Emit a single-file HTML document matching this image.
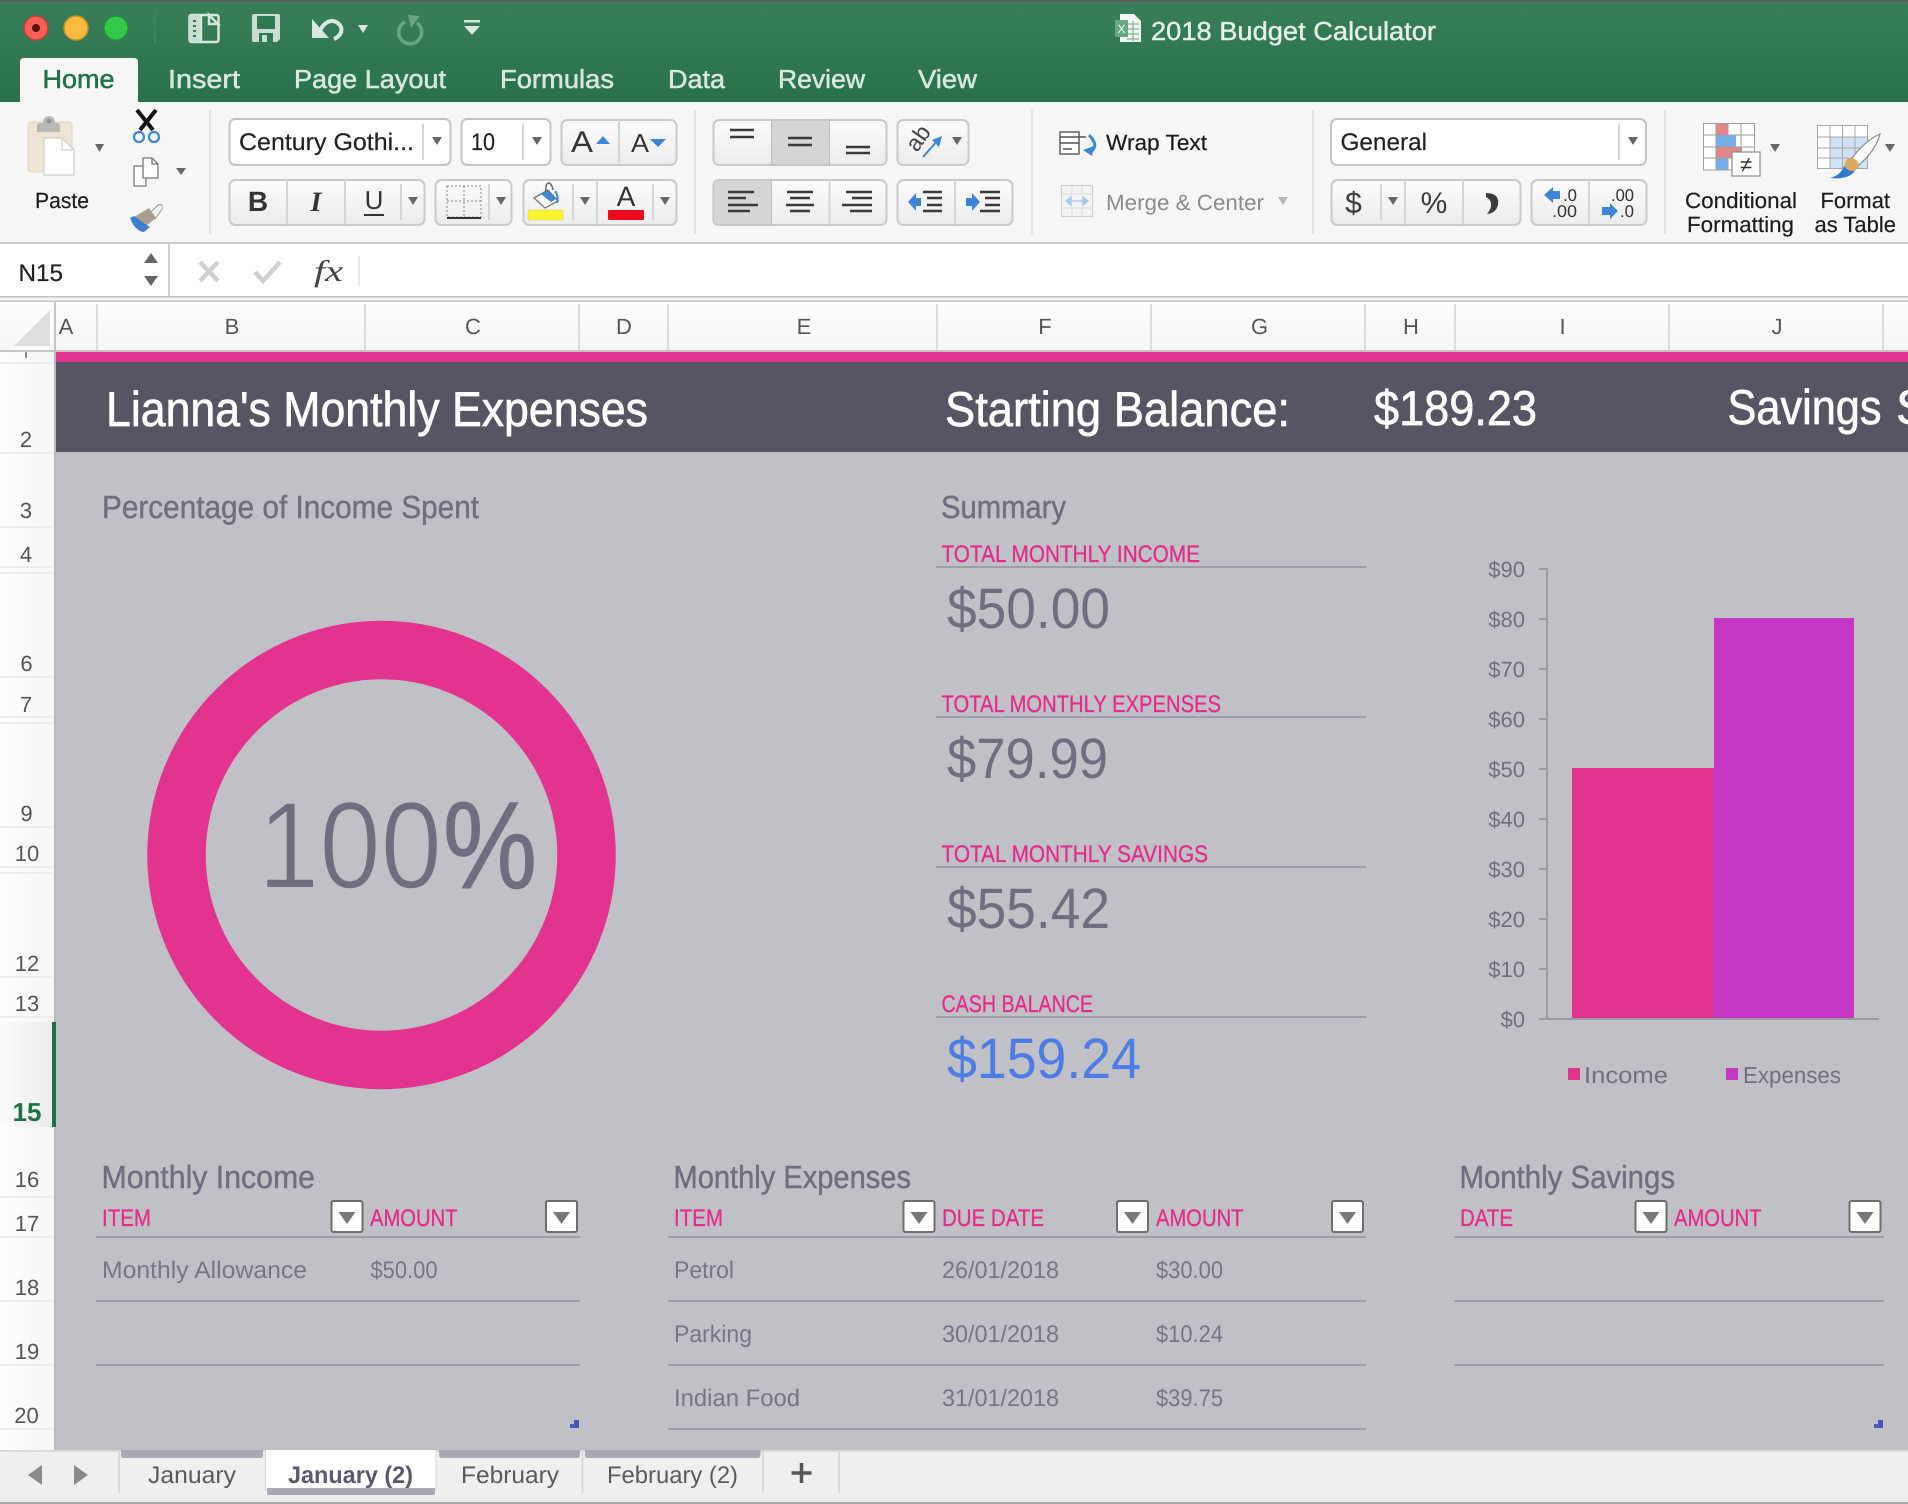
<!DOCTYPE html>
<html><head><meta charset="utf-8"><title>2018 Budget Calculator</title>
<style>
html,body{margin:0;padding:0;background:#c0c1c6}
svg{display:block;position:absolute;left:0;top:0}
text{font-family:"Liberation Sans",sans-serif;text-rendering:geometricPrecision;white-space:pre}
.tab{font-size:26px;fill:#d9e8df;stroke:#d9e8df;stroke-width:.5}
.rib{font-size:22px;fill:#1c1c1c;stroke:#1c1c1c;stroke-width:.2}
.box{font-size:24px;fill:#222;stroke:#222;stroke-width:.2}
.col{font-size:22px;fill:#555;text-anchor:middle}
.row{font-size:22px;fill:#555;text-anchor:middle}
.h1{font-size:49px;fill:#fff;stroke:#fff;stroke-width:.7}
.h2{font-size:32px;fill:#6f6e80;stroke:#6f6e80;stroke-width:.4}
.pk{font-size:24px;fill:#e62a8c;stroke:#e62a8c;stroke-width:.3}
.big{font-size:57px;fill:#6f6e80}
.cell{font-size:24px;fill:#75758a}
.ax{font-size:22px;fill:#706f80;text-anchor:end}
.lg{font-size:23px;fill:#706f80}
.sh{font-size:24px;fill:#5a5a5a}
.sep{stroke:#dfdfdf;stroke-width:2}
.cs{stroke:#dcdcdc;stroke-width:2}
.rs{stroke:#ececec;stroke-width:2}
.tl{stroke:#9e9ea8;stroke-width:2}
.g{fill:url(#btn);stroke:#c9c9c9;stroke-width:2}
.w{fill:#fff;stroke:#c4c4c4;stroke-width:2}
.bs{stroke:#d4d4d4;stroke-width:2}
.al{stroke:#3a3a3a;stroke-width:2.4}
</style></head><body>
<svg width="1908" height="1504" viewBox="0 0 1908 1504" xmlns="http://www.w3.org/2000/svg">
<defs>
<linearGradient id="gr" x1="0" y1="0" x2="0" y2="1"><stop offset="0" stop-color="#398059"/><stop offset="1" stop-color="#28714a"/></linearGradient>
<linearGradient id="btn" x1="0" y1="0" x2="0" y2="1"><stop offset="0" stop-color="#fbfbfb"/><stop offset="1" stop-color="#ececec"/></linearGradient>
<linearGradient id="rh" x1="0" y1="0" x2="1" y2="0"><stop offset="0" stop-color="#ffffff"/><stop offset="1" stop-color="#f5f5f5"/></linearGradient>
<linearGradient id="rsel" x1="0" y1="0" x2="1" y2="0"><stop offset="0" stop-color="#fbfbfb"/><stop offset="1" stop-color="#ebebeb"/></linearGradient>
<linearGradient id="hd" x1="0" y1="0" x2="0" y2="1"><stop offset="0" stop-color="#fdfdfd"/><stop offset="1" stop-color="#f6f6f6"/></linearGradient>
<path id="tri" d="M-5 -4H5L0 4Z" fill="#666"/>
<g id="fb"><rect x="1" y="1" width="31" height="31" rx="2" fill="#fff" stroke="#6e6e6e" stroke-width="2"/><path d="M8 12H25L16.500 24Z" fill="#777"/></g>
<path id="mk" d="M4 0H9V8H0V4H4Z" fill="#4758b8"/>
</defs>

<!-- page background -->
<rect width="1908" height="1504" fill="#c0c1c6"/>

<!-- title bar -->
<rect width="1908" height="102" fill="url(#gr)"/>
<rect width="1908" height="2" fill="#5a5f5c"/>
<circle cx="36" cy="28" r="12" fill="#fb5f57" stroke="#b5443c" stroke-width="1.500"/><circle cx="36" cy="28" r="4" fill="#5c0d08"/>
<circle cx="76" cy="28" r="12" fill="#fdbb3e" stroke="#c88f2c" stroke-width="1.500"/>
<circle cx="116" cy="28" r="12" fill="#34c84a" stroke="#23933a" stroke-width="1.500"/>
<path d="M155 12V43" stroke="#3f8762" stroke-width="1.500"/>
<!-- sidebar icon -->
<rect x="189.500" y="15" width="29" height="27" rx="2" fill="none" stroke="#d6e6dc" stroke-width="2.500"/>
<rect x="189" y="15" width="11" height="27" fill="#c9ddd1"/>
<path d="M193 21h3M193 26h3M193 31h3M193 36h3" stroke="#2f7a52" stroke-width="2"/>
<path d="M201 15V42M209 15l9 9h-9z" fill="none" stroke="#d6e6dc" stroke-width="2.500"/>
<!-- save -->
<path d="M252 16q0-2 2-2h24q2 0 2 2v23l-3 3h-23q-2 0-2-2z" fill="#c9ddd1"/>
<rect x="257" y="16" width="18" height="13" fill="#2f7a52"/>
<rect x="259" y="33" width="14" height="9" fill="#2f7a52"/><rect x="262" y="35" width="5" height="7" fill="#c9ddd1"/>
<!-- undo -->
<path d="M320 32C322 23 331 19 336 22C344 26 343 35 334 39" fill="none" stroke="#d9e8df" stroke-width="4"/>
<path d="M312 19V38H329Z" fill="#d9e8df"/>
<path d="M358 25H368L363 33Z" fill="#d9e8df"/>
<!-- redo -->
<path d="M405 22A11.500 11.500 0 1 0 417 23" fill="none" stroke="#6aa386" stroke-width="3.500"/>
<path d="M408 15L420 16L411 28Z" fill="#6aa386"/>
<!-- customise -->
<rect x="464" y="20" width="16" height="2.500" fill="#d9e8df"/><path d="M464 26H480L472 35Z" fill="#d9e8df"/>

<!-- title -->
<path d="M1120 14H1134L1141 21V42H1120Z" fill="#f2f7f3"/>
<path d="M1127 24H1139M1127 29H1139M1127 34H1139M1127 39H1139M1133 21V41" stroke="#7fb495" stroke-width="1.200"/>
<rect x="1115" y="20" width="13" height="17" fill="#6aa882"/>
<text x="1117.500" y="33" style="font-size:12px;fill:#fff">X</text>
<text x="1151" y="40" textLength="285" lengthAdjust="spacingAndGlyphs" style="font-size:26px;fill:#e6efe9;stroke:#e6efe9;stroke-width:.4">2018 Budget Calculator</text>

<!-- ribbon tabs -->
<path d="M20 102V62q0-4 4-4H134q4 0 4 4V102Z" fill="#f6f6f6"/>
<text x="42.500" y="88" textLength="72" lengthAdjust="spacingAndGlyphs" class="tab" style="fill:#1f7248;stroke:#1f7248">Home</text>
<text x="168" y="88" textLength="72" lengthAdjust="spacingAndGlyphs" class="tab">Insert</text>
<text x="294" y="88" textLength="152" lengthAdjust="spacingAndGlyphs" class="tab">Page Layout</text>
<text x="500" y="88" textLength="114" lengthAdjust="spacingAndGlyphs" class="tab">Formulas</text>
<text x="668" y="88" textLength="57" lengthAdjust="spacingAndGlyphs" class="tab">Data</text>
<text x="778" y="88" textLength="87" lengthAdjust="spacingAndGlyphs" class="tab">Review</text>
<text x="918" y="88" textLength="59" lengthAdjust="spacingAndGlyphs" class="tab">View</text>

<!-- ribbon -->
<rect y="102" width="1908" height="140" fill="#f6f6f6"/>
<rect y="242" width="1908" height="2" fill="#cbcbcb"/>

<!-- paste -->
<rect x="28" y="122" width="44" height="50" rx="3" fill="#efe4d3" stroke="#e2d5c0"/>
<path d="M37 132V126Q37 123 40 123H43Q43 116 49 116Q55 116 55 123H57Q60 123 60 126V132Z" fill="#b9b9b9"/>
<circle cx="49" cy="121" r="2.500" fill="#8e8e8e"/>
<path d="M44 138H62L74 150V175H44Z" fill="#fff" stroke="#cfcfcf" stroke-width="1.200"/><path d="M62 138V150H74" fill="none" stroke="#cfcfcf" stroke-width="1.200"/>
<path d="M95 144H104L99.500 152Z" fill="#666"/>
<text x="35" y="208" textLength="54" lengthAdjust="spacingAndGlyphs" class="rib">Paste</text>
<!-- scissors -->
<path d="M137 110L153 130M156 110L140 130" stroke="#111" stroke-width="4"/>
<circle cx="139" cy="137" r="5" fill="none" stroke="#3d85d6" stroke-width="2.200"/><circle cx="154" cy="137" r="5" fill="none" stroke="#3d85d6" stroke-width="2.200"/>
<!-- copy -->
<path d="M134 166H146V186H134Z" fill="#fff" stroke="#777" stroke-width="1.300"/>
<path d="M143 158H152L158 164V178H143Z" fill="#fff" stroke="#777" stroke-width="1.300"/><path d="M152 158V164H158" fill="none" stroke="#777" stroke-width="1.300"/>
<path d="M176 168H186L181 175Z" fill="#666"/>
<!-- format painter -->
<path d="M150 213L158 205Q163 203 162 209L155 219Z" fill="#f2f2f2" stroke="#999" stroke-width="1"/>
<path d="M134 217L149 208L156 218L146 226Z" fill="#a99d90"/>
<path d="M130 218L134 216L148 226L150 227L144 232Q135 231 130 218Z" fill="#3d7fcf"/>
<path d="M210 110V234" style="stroke:#e2e2e2;stroke-width:2"/>

<!-- font name / size -->
<rect x="229.500" y="119" width="221" height="46" rx="6" class="w"/>
<text x="239" y="150" textLength="175" lengthAdjust="spacingAndGlyphs" class="box">Century Gothi...</text>
<path d="M423 124V160" class="bs"/><use href="#tri" x="437" y="141"/>
<rect x="461.500" y="119" width="89" height="46" rx="6" class="w"/>
<text x="471" y="150" textLength="24" lengthAdjust="spacingAndGlyphs" class="box">10</text>
<path d="M523 124V160" class="bs"/><use href="#tri" x="537" y="141"/>
<!-- grow shrink -->
<rect x="561.500" y="120" width="115" height="45" rx="6" class="g"/>
<path d="M619 120V165" class="bs"/>
<text x="571" y="152" textLength="22" lengthAdjust="spacingAndGlyphs" style="font-size:30px;fill:#333">A</text>
<path d="M596 144H610L603 136Z" fill="#3d85d6"/>
<text x="631" y="152" textLength="18" lengthAdjust="spacingAndGlyphs" style="font-size:26px;fill:#333">A</text>
<path d="M650 139H666L658 147Z" fill="#3d85d6"/>
<!-- BIU -->
<rect x="229.500" y="180" width="195" height="45" rx="6" class="g"/>
<path d="M287 180V225M345 180V225" class="bs"/><path d="M401 184V220" class="bs"/>
<text x="258" y="211" style="font-size:28px;font-weight:700;fill:#333;text-anchor:middle">B</text>
<text x="316" y="211" style="font-size:28px;font-weight:700;font-style:italic;font-family:'Liberation Serif',serif;fill:#333;text-anchor:middle">I</text>
<text x="374" y="209" style="font-size:26px;fill:#333;text-anchor:middle">U</text>
<path d="M364 215H384" stroke="#333" stroke-width="2"/>
<use href="#tri" x="413" y="201"/>
<!-- borders -->
<rect x="435.500" y="180" width="76" height="45" rx="6" class="g"/>
<path d="M447 186H481V217H447ZM464 186V217M447 201H481" fill="none" stroke="#9a9a9a" stroke-width="1.200" stroke-dasharray="2 2"/>
<path d="M447 218H481" stroke="#333" stroke-width="2"/>
<path d="M489 184V220" class="bs"/><use href="#tri" x="501" y="201"/>
<!-- fill & font colour -->
<rect x="523.500" y="180" width="153" height="45" rx="6" class="g"/>
<path d="M597 180V225" class="bs"/><path d="M573 184V220M653 184V220" class="bs"/>
<path d="M534 198L548 190L558 201L545 208Z" fill="#fff" stroke="#777" stroke-width="1.300"/>
<path d="M541 194L548 190L556 199L551 202Z" fill="#3d85d6"/>
<path d="M546 192Q545 183 549 183Q552 184 553 190" fill="none" stroke="#666" stroke-width="1.500"/>
<path d="M555 191Q559 196 557 203" fill="none" stroke="#3d85d6" stroke-width="2"/>
<rect x="528" y="210" width="35" height="10" rx="1" fill="#fdf32d" stroke="#d8d058" stroke-width=".6"/>
<use href="#tri" x="585" y="201"/>
<text x="626" y="206" style="font-size:28px;fill:#333;text-anchor:middle">A</text>
<rect x="608" y="210" width="36" height="10" rx="1" fill="#ee0a1e"/>
<use href="#tri" x="665" y="201"/>
<path d="M695 110V234" style="stroke:#e2e2e2;stroke-width:2"/>

<!-- vertical align -->
<rect x="713.500" y="120" width="173" height="45" rx="6" class="g"/>
<rect x="771.500" y="120" width="58" height="45" fill="#d5d5d5" stroke="#bdbdbd" stroke-width="1"/>
<path d="M730 130H754M730 137H754M788 138H812M788 145H812M846 147H870M846 153H870" class="al"/>
<!-- orientation -->
<rect x="897.500" y="120" width="71" height="45" rx="6" class="g"/>
<text transform="translate(917,153) rotate(-55)" style="font-size:23px;fill:#444">ab</text>
<path d="M923 157L938 140" stroke="#3d85d6" stroke-width="2"/><path d="M942 136L932 140L939 147Z" fill="#3d85d6"/>
<use href="#tri" x="957" y="141"/>
<!-- h align -->
<rect x="713.500" y="180" width="173" height="45" rx="6" class="g"/>
<path d="M713 186q0-6 6-6H771.500V225H719q-6 0-6-6Z" fill="#d5d5d5" stroke="#bdbdbd" stroke-width="1"/>
<path d="M829.500 180V225" class="bs"/>
<path d="M728 192H754M728 198H746M728 205H758M728 211H750" class="al"/>
<path d="M787 192H813M790 198H810M786 205H814M790 211H810" class="al"/>
<path d="M846 192H872M852 198H872M842 205H872M850 211H872" class="al"/>
<!-- indent -->
<rect x="897.500" y="180" width="115" height="45" rx="6" class="g"/>
<path d="M955 180V225" class="bs"/>
<path d="M908 202L916 193V198H921V206H916V211Z" fill="#3d85d6"/>
<path d="M923 192H942M927 198H942M927 205H942M923 211H942" class="al"/>
<path d="M980 202L972 193V198H966V206H972V211Z" fill="#3d85d6"/>
<path d="M980 192H1000M985 198H1000M985 205H1000M980 211H1000" class="al"/>
<path d="M1032 110V234" style="stroke:#e2e2e2;stroke-width:2"/>

<!-- wrap -->
<rect x="1060" y="132" width="19" height="22" fill="#fff" stroke="#555" stroke-width="1.400"/>
<path d="M1060 137H1086M1060 143H1079M1063 149H1072" stroke="#555" stroke-width="1.400"/>
<path d="M1089 135Q1100 146 1090 152" fill="none" stroke="#3d85d6" stroke-width="3"/><path d="M1083 150L1094 146L1092 156Z" fill="#3d85d6"/>
<text x="1106" y="150" textLength="101" lengthAdjust="spacingAndGlyphs" class="rib">Wrap Text</text>
<!-- merge -->
<rect x="1061.500" y="185.500" width="31" height="31" fill="#f3f3f3" stroke="#cfcfcf" stroke-width="1.200"/>
<path d="M1072 186V194M1082 186V194M1072 208V217M1082 208V217M1062 194H1093M1062 208H1093" stroke="#d8d8d8" stroke-width="1"/>
<path d="M1066 201H1088M1066 201L1071 197V205ZM1088 201L1083 197V205Z" fill="#a9c8ec" stroke="#a9c8ec" stroke-width="1.500"/>
<text x="1106" y="210" textLength="158" lengthAdjust="spacingAndGlyphs" class="rib" style="fill:#8a8a8a;stroke:none">Merge &amp; Center</text>
<path d="M1278 197H1288L1283 205Z" fill="#b5b5b5"/>
<path d="M1313 110V234" style="stroke:#e2e2e2;stroke-width:2"/>

<!-- number format -->
<rect x="1331" y="119" width="315" height="46" rx="6" class="w"/>
<text x="1340.500" y="150" textLength="86.500" lengthAdjust="spacingAndGlyphs" class="box">General</text>
<path d="M1619 124V160" class="bs"/><use href="#tri" x="1633" y="141"/>
<rect x="1331.500" y="180" width="189" height="45" rx="6" class="g"/>
<path d="M1405 180V225M1463 180V225" class="bs"/><path d="M1381 184V220" class="bs"/>
<text x="1353.500" y="213" style="font-size:30px;fill:#3c3c3c;text-anchor:middle">$</text>
<use href="#tri" x="1393" y="201"/>
<text x="1434" y="213" style="font-size:30px;fill:#3c3c3c;text-anchor:middle">%</text>
<path d="M1486 193Q1500 193 1498 205Q1496 213 1487 214Q1492 208 1491 203Q1490 199 1486 197Z" fill="#3c3c3c"/>
<rect x="1531.500" y="180" width="115" height="45" rx="6" class="g"/>
<path d="M1589 180V225" class="bs"/>
<path d="M1544 195L1553 187V191H1560V199H1553V203Z" fill="#3d85d6"/>
<text x="1563" y="201" textLength="14" lengthAdjust="spacingAndGlyphs" style="font-size:17px;fill:#333">.0</text>
<text x="1552" y="217" textLength="25" lengthAdjust="spacingAndGlyphs" style="font-size:17px;fill:#333">.00</text>
<text x="1611" y="201" textLength="23" lengthAdjust="spacingAndGlyphs" style="font-size:17px;fill:#333">.00</text>
<path d="M1618 211L1610 203V207H1602V215H1610V219Z" fill="#3d85d6"/>
<text x="1620" y="217" textLength="14" lengthAdjust="spacingAndGlyphs" style="font-size:17px;fill:#333">.0</text>
<path d="M1665 110V234" style="stroke:#e2e2e2;stroke-width:2"/>

<!-- conditional formatting -->
<rect x="1703" y="123" width="52" height="47" fill="#fff"/>
<rect x="1716" y="124" width="12" height="11" fill="#e78486"/>
<rect x="1716" y="135" width="20" height="12" fill="#74aeeb"/>
<rect x="1716" y="147" width="26" height="11" fill="#e78486"/>
<rect x="1716" y="158" width="12" height="12" fill="#74aeeb"/>
<path d="M1703.500 123.500H1754.500V170H1703.500ZM1716 124V170M1728 124V170M1741 124V170M1704 135H1755M1704 147H1755M1704 158H1755" fill="none" stroke="#9e9e9e" stroke-width="1"/>
<rect x="1732" y="152" width="28" height="24" fill="#fff" stroke="#8a8a8a" stroke-width="1.200"/>
<text x="1746" y="172" style="font-size:22px;fill:#333;text-anchor:middle">≠</text>
<path d="M1770 144H1780L1775 152Z" fill="#666"/>
<text x="1685" y="208" textLength="112" lengthAdjust="spacingAndGlyphs" class="rib">Conditional</text>
<text x="1687" y="232" textLength="107" lengthAdjust="spacingAndGlyphs" class="rib">Formatting</text>

<!-- format as table -->
<rect x="1817.500" y="125.500" width="50" height="43" fill="#fff"/>
<rect x="1830" y="137" width="38" height="31" fill="#d0e2f5"/>
<path d="M1817.500 125.500H1867.500V168.500H1817.500ZM1830 126V168M1842.500 126V168M1855 126V168M1818 137H1868M1818 148H1868M1818 158H1868" fill="none" stroke="#a8a8a8" stroke-width="1"/>
<path d="M1880 134Q1866 140 1852 158L1859 165Q1876 150 1880 134Z" fill="#fdfdfd" stroke="#8a8a8a" stroke-width="1.200"/>
<path d="M1848 158Q1858 157 1859 167Q1854 174 1845 171Q1843 163 1848 158Z" fill="#dca964"/>
<path d="M1830 178Q1841 175 1844 166Q1848 172 1855 171Q1848 180 1830 178Z" fill="#2e7bd3"/>
<path d="M1885 144H1895L1890 152Z" fill="#666"/>
<text x="1820.500" y="208" textLength="69.500" lengthAdjust="spacingAndGlyphs" class="rib">Format</text>
<text x="1814.500" y="232" textLength="81.500" lengthAdjust="spacingAndGlyphs" class="rib">as Table</text>

<!-- formula bar -->
<rect y="244" width="1908" height="52" fill="#fff"/>
<rect x="168" y="244" width="2" height="52" fill="#cfcfcf"/>
<text x="18.500" y="281" textLength="44.500" lengthAdjust="spacingAndGlyphs" class="box">N15</text>
<path d="M144 263H158L151 253Z" fill="#666"/><path d="M144 276H158L151 286Z" fill="#666"/>
<path d="M200 262L218 281M218 262L200 281" stroke="#d0d0d0" stroke-width="4.500"/>
<path d="M255 272L263 281L280 262" fill="none" stroke="#d0d0d0" stroke-width="4.500"/>
<text x="314" y="281" textLength="29" lengthAdjust="spacingAndGlyphs" style="font-family:'Liberation Serif',serif;font-style:italic;font-size:30px;fill:#444">fx</text>
<path d="M359 256V286" stroke="#e0e0e0" stroke-width="1.500"/>
<rect y="296" width="1908" height="1.500" fill="#c4c4c4"/>
<rect y="297.500" width="1908" height="3" fill="#f2f2f2"/>
<rect y="300.500" width="1908" height="1.500" fill="#c4c4c4"/>

<!-- column header -->
<rect y="302" width="1908" height="48" fill="url(#hd)"/>
<rect y="350" width="1908" height="2" fill="#c6c6c6"/>
<path d="M14 346H50V310Z" fill="#dedede"/>
<rect x="54" y="302" width="2" height="50" fill="#c4c4c4"/>
<path d="M97 304V350M365 304V350M579 304V350M668 304V350M937 304V350M1151 304V350M1365 304V350M1455 304V350M1669 304V350M1883 304V350" class="cs"/>
<text x="66" y="334" class="col">A</text>
<text x="232" y="334" class="col">B</text>
<text x="473" y="334" class="col">C</text>
<text x="624" y="334" class="col">D</text>
<text x="804" y="334" class="col">E</text>
<text x="1045" y="334" class="col">F</text>
<text x="1259.500" y="334" class="col">G</text>
<text x="1411" y="334" class="col">H</text>
<text x="1562.500" y="334" class="col">I</text>
<text x="1777" y="334" class="col">J</text>

<!-- row header -->
<rect y="352" width="54" height="1098" fill="url(#rh)"/>
<rect x="54" y="352" width="2" height="1098" fill="#b9b9b9"/>
<rect y="1022" width="52" height="105" fill="url(#rsel)"/>
<rect x="52" y="1022" width="4" height="105" fill="#1f7246"/>
<path d="M26 352V358" stroke="#666" stroke-width="1.500"/>
<path d="M0 363H54M0 453H54M0 527H54M0 567H54M0 573H54M0 677H54M0 717H54M0 723H54M0 827H54M0 867H54M0 873H54M0 977H54M0 1017H54M0 1197H54M0 1237H54M0 1301H54M0 1365H54M0 1429H54" class="rs"/>
<text x="26" y="447" class="row">2</text>
<text x="26" y="518" class="row">3</text>
<text x="26" y="562" class="row">4</text>
<text x="26.500" y="671" class="row">6</text>
<text x="26" y="712" class="row">7</text>
<text x="26.500" y="821" class="row">9</text>
<text x="27" y="861" class="row">10</text>
<text x="27" y="971" class="row">12</text>
<text x="27" y="1011" class="row">13</text>
<text x="27" y="1121" style="font-size:26px;font-weight:700;fill:#1f7246;text-anchor:middle">15</text>
<text x="27" y="1187" class="row">16</text>
<text x="27" y="1231" class="row">17</text>
<text x="27" y="1295" class="row">18</text>
<text x="27" y="1359" class="row">19</text>
<text x="26.500" y="1423" class="row">20</text>

<!-- sheet banner -->
<rect x="56" y="352" width="1852" height="10" fill="#e2338e"/>
<rect x="56" y="362" width="1852" height="90" fill="#555563"/>
<text x="106" y="426" textLength="542" lengthAdjust="spacingAndGlyphs" class="h1">Lianna's Monthly Expenses</text>
<text x="945" y="426" textLength="345" lengthAdjust="spacingAndGlyphs" class="h1">Starting Balance:</text>
<text x="1374" y="425" textLength="163" lengthAdjust="spacingAndGlyphs" class="h1">$189.23</text>
<text x="1727.500" y="424" textLength="154" lengthAdjust="spacingAndGlyphs" class="h1">Savings</text>
<text x="1896" y="424" class="h1">S</text>

<!-- donut -->
<text x="102" y="518" textLength="377" lengthAdjust="spacingAndGlyphs" class="h2">Percentage of Income Spent</text>
<circle cx="381.500" cy="855" r="205" fill="none" stroke="#e2338e" stroke-width="58.500"/>
<text x="258" y="888" textLength="184" lengthAdjust="spacingAndGlyphs" style="font-size:124px;fill:#6e6e80;stroke:#c0c1c6;stroke-width:2">100</text>
<text x="443" y="888" textLength="94" lengthAdjust="spacingAndGlyphs" style="font-size:124px;fill:#6e6e80;stroke:#6e6e80;stroke-width:1">%</text>

<!-- summary -->
<text x="941" y="518" textLength="125" lengthAdjust="spacingAndGlyphs" class="h2">Summary</text>
<text x="941.500" y="562" textLength="258.500" lengthAdjust="spacingAndGlyphs" class="pk">TOTAL MONTHLY INCOME</text>
<path d="M936 567H1366M936 717H1366M936 867H1366M936 1017H1366" class="tl"/>
<text x="947" y="628" textLength="163" lengthAdjust="spacingAndGlyphs" class="big">$50.00</text>
<text x="941.500" y="712" textLength="279.500" lengthAdjust="spacingAndGlyphs" class="pk">TOTAL MONTHLY EXPENSES</text>
<text x="947" y="778" textLength="161" lengthAdjust="spacingAndGlyphs" class="big">$79.99</text>
<text x="941.500" y="862" textLength="266.500" lengthAdjust="spacingAndGlyphs" class="pk">TOTAL MONTHLY SAVINGS</text>
<text x="947" y="928" textLength="163" lengthAdjust="spacingAndGlyphs" class="big">$55.42</text>
<text x="941.500" y="1012" textLength="151.500" lengthAdjust="spacingAndGlyphs" class="pk">CASH BALANCE</text>
<text x="947" y="1078" textLength="194" lengthAdjust="spacingAndGlyphs" class="big" style="fill:#4d7ce4">$159.24</text>

<!-- chart -->
<rect x="1572" y="768" width="142" height="250" fill="#e2338e"/>
<rect x="1714" y="618" width="140" height="400" fill="#c637c6"/>
<path d="M1547 568V1019M1539 1019H1879M1539 569H1547M1539 619H1547M1539 669H1547M1539 719H1547M1539 769H1547M1539 819H1547M1539 869H1547M1539 919H1547M1539 969H1547" stroke="#9a9aa2" stroke-width="2" fill="none"/>
<text x="1525" y="577" class="ax">$90</text>
<text x="1525" y="627" class="ax">$80</text>
<text x="1525" y="677" class="ax">$70</text>
<text x="1525" y="727" class="ax">$60</text>
<text x="1525" y="777" class="ax">$50</text>
<text x="1525" y="827" class="ax">$40</text>
<text x="1525" y="877" class="ax">$30</text>
<text x="1525" y="927" class="ax">$20</text>
<text x="1525" y="977" class="ax">$10</text>
<text x="1525" y="1027" class="ax">$0</text>
<rect x="1568" y="1068" width="12" height="12" fill="#e2338e"/>
<text x="1584" y="1083" textLength="84" lengthAdjust="spacingAndGlyphs" class="lg">Income</text>
<rect x="1726" y="1068" width="12" height="12" fill="#c637c6"/>
<text x="1743" y="1083" textLength="98" lengthAdjust="spacingAndGlyphs" class="lg">Expenses</text>

<!-- monthly income -->
<text x="101.500" y="1188" textLength="213.500" lengthAdjust="spacingAndGlyphs" class="h2">Monthly Income</text>
<text x="102" y="1226" textLength="49" lengthAdjust="spacingAndGlyphs" class="pk">ITEM</text>
<text x="370" y="1226" textLength="87.500" lengthAdjust="spacingAndGlyphs" class="pk">AMOUNT</text>
<use href="#fb" x="330.500" y="1200"/><use href="#fb" x="545" y="1200"/>
<path d="M96 1237H580M96 1301H580M96 1365H580" class="tl"/>
<text x="102" y="1278" textLength="205" lengthAdjust="spacingAndGlyphs" class="cell">Monthly Allowance</text>
<text x="370.500" y="1278" textLength="67" lengthAdjust="spacingAndGlyphs" class="cell">$50.00</text>
<use href="#mk" x="570" y="1420"/>

<!-- monthly expenses -->
<text x="673.500" y="1188" textLength="237.500" lengthAdjust="spacingAndGlyphs" class="h2">Monthly Expenses</text>
<text x="674" y="1226" textLength="49" lengthAdjust="spacingAndGlyphs" class="pk">ITEM</text>
<text x="942" y="1226" textLength="102" lengthAdjust="spacingAndGlyphs" class="pk">DUE DATE</text>
<text x="1156" y="1226" textLength="87.500" lengthAdjust="spacingAndGlyphs" class="pk">AMOUNT</text>
<use href="#fb" x="902.500" y="1200"/><use href="#fb" x="1116" y="1200"/><use href="#fb" x="1331" y="1200"/>
<path d="M668 1237H1366M668 1301H1366M668 1365H1366M668 1429H1366" class="tl"/>
<text x="674" y="1278" textLength="60" lengthAdjust="spacingAndGlyphs" class="cell">Petrol</text>
<text x="942" y="1278" textLength="117" lengthAdjust="spacingAndGlyphs" class="cell">26/01/2018</text>
<text x="1156" y="1278" textLength="67" lengthAdjust="spacingAndGlyphs" class="cell">$30.00</text>
<text x="674" y="1342" textLength="78" lengthAdjust="spacingAndGlyphs" class="cell">Parking</text>
<text x="942" y="1342" textLength="117" lengthAdjust="spacingAndGlyphs" class="cell">30/01/2018</text>
<text x="1156" y="1342" textLength="67" lengthAdjust="spacingAndGlyphs" class="cell">$10.24</text>
<text x="674" y="1406" textLength="126" lengthAdjust="spacingAndGlyphs" class="cell">Indian Food</text>
<text x="942" y="1406" textLength="117" lengthAdjust="spacingAndGlyphs" class="cell">31/01/2018</text>
<text x="1156" y="1406" textLength="67" lengthAdjust="spacingAndGlyphs" class="cell">$39.75</text>

<!-- monthly savings -->
<text x="1459.500" y="1188" textLength="215.500" lengthAdjust="spacingAndGlyphs" class="h2">Monthly Savings</text>
<text x="1460" y="1226" textLength="53" lengthAdjust="spacingAndGlyphs" class="pk">DATE</text>
<text x="1674" y="1226" textLength="87.500" lengthAdjust="spacingAndGlyphs" class="pk">AMOUNT</text>
<use href="#fb" x="1634.500" y="1200"/><use href="#fb" x="1848.500" y="1200"/>
<path d="M1454 1237H1884M1454 1301H1884M1454 1365H1884" class="tl"/>
<use href="#mk" x="1874" y="1420"/>

<!-- sheet tabs -->
<rect y="1450" width="1908" height="52" fill="#efefef"/>
<rect y="1450" width="1908" height="2" fill="#dadada"/>
<rect y="1502" width="1908" height="2" fill="#a8a8a8"/>
<path d="M42 1465V1485L28 1475Z" fill="#8a8a8a"/>
<path d="M74 1465V1485L88 1475Z" fill="#8a8a8a"/>
<path d="M119 1452V1493M582.500 1452V1493M763 1452V1493M839 1452V1493" stroke="#d2d2d2" stroke-width="1.500"/>
<path d="M121 1450H263V1455q0 3-3 3H124q-3 0-3-3Z" fill="#a9a9b5"/>
<path d="M439 1450H580V1455q0 3-3 3H442q-3 0-3-3Z" fill="#a9a9b5"/>
<path d="M585 1450H760.500V1455q0 3-3 3H588q-3 0-3-3Z" fill="#a9a9b5"/>
<rect x="265.500" y="1450" width="170.500" height="38" fill="#fff"/>
<path d="M265.500 1450V1490M436 1450V1490" stroke="#d8d8d8" stroke-width="1"/>
<path d="M267 1488H435V1493q0 2-2 2H269q-2 0-2-2Z" fill="#a9a9b5"/>
<text x="148" y="1483" textLength="88" lengthAdjust="spacingAndGlyphs" class="sh">January</text>
<text x="288" y="1483" textLength="125" lengthAdjust="spacingAndGlyphs" class="sh" style="fill:#5a5a6e;font-weight:700">January (2)</text>
<text x="461" y="1483" textLength="98" lengthAdjust="spacingAndGlyphs" class="sh">February</text>
<text x="607" y="1483" textLength="131" lengthAdjust="spacingAndGlyphs" class="sh">February (2)</text>
<path d="M791.500 1473H811.500M801.500 1463V1483" stroke="#555" stroke-width="3.500"/>
</svg>
</body></html>
